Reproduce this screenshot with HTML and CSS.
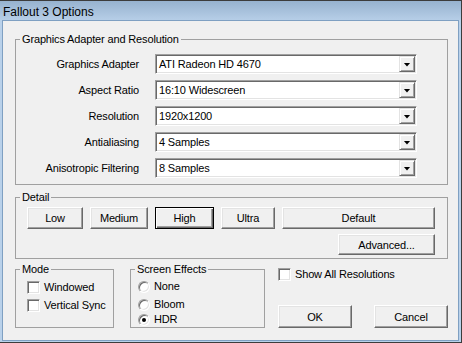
FILE: index.html
```html
<!DOCTYPE html>
<html lang="en">
<head>
  <meta charset="UTF-8" />
  <title>Fallout 3 Options</title>
  <link rel="stylesheet" href="styles.css">
</head>
<body>
  <div class="window">
    <div class="titlebar">Fallout 3 Options</div>

    <div class="client">
      <fieldset class="group">
        <legend>Graphics Adapter and Resolution</legend>
        <div class="settings">
          <label>Graphics Adapter</label>
          <div class="combo"><span>ATI Radeon HD 4670</span><i class="drop"></i></div>
          <label>Aspect Ratio</label>
          <div class="combo"><span>16:10 Widescreen</span><i class="drop"></i></div>
          <label>Resolution</label>
          <div class="combo"><span>1920x1200</span><i class="drop"></i></div>
          <label>Antialiasing</label>
          <div class="combo"><span>4 Samples</span><i class="drop"></i></div>
          <label>Anisotropic Filtering</label>
          <div class="combo"><span>8 Samples</span><i class="drop"></i></div>
        </div>
      </fieldset>

      <fieldset class="group detail">
        <legend>Detail</legend>
        <div class="presets">
          <button class="btn">Low</button>
          <button class="btn">Medium</button>
          <button class="btn focused">High</button>
          <button class="btn">Ultra</button>
          <button class="btn">Default</button>
          <button class="btn advanced">Advanced...</button>
        </div>
      </fieldset>

      <div class="bottom">
        <fieldset class="group mode">
          <legend>Mode</legend>
          <div class="options">
            <div class="check"><span class="box"></span>Windowed</div>
            <div class="check"><span class="box"></span>Vertical Sync</div>
          </div>
        </fieldset>

        <fieldset class="group effects">
          <legend>Screen Effects</legend>
          <div class="radios">
            <div class="radio first"><span class="dot"></span>None</div>
            <div class="radio"><span class="dot"></span>Bloom</div>
            <div class="radio"><span class="dot checked"></span>HDR</div>
          </div>
        </fieldset>

        <div class="actions">
          <div class="check"><span class="box"></span>Show All Resolutions</div>
          <div class="dialog-buttons">
            <button class="btn">OK</button>
            <button class="btn">Cancel</button>
          </div>
        </div>
      </div>
    </div>
  </div>
</body>
</html>
```

FILE: styles.css
```css
* {
  box-sizing: border-box;
}

body {
  margin: 0;
  font-family: 'Liberation Sans', Arial, sans-serif;
  font-size: 11px;
  letter-spacing: -0.15px;
  color: #000;
  background: #f0f0f0;
}

.window {
  width: 462px;
  height: 343px;
  display: flex;
  flex-direction: column;
  background: #b9d1ea;
  border: 1px solid #3c3c3c;
  border-left: none;
}

.titlebar {
  height: 19px;
  line-height: 23px;
  overflow: hidden;
  padding-left: 3px;
  font-size: 12px;
  letter-spacing: 0;
  background: linear-gradient(to bottom, #97b2cf, #b6cee7);
}

.client {
  flex: 1;
  margin: 0 2px 1px 2px;
  background: #f0f0f0;
  border: 1px solid #7fa0c2;
  padding: 12px 10px 0 12px;
}

.group {
  margin: 0;
  padding: 0;
  min-width: 0;
  border: 1px solid #a0a0a0;
}

.group legend {
  margin-left: 4px;
  padding: 0 2px;
  line-height: 13px;
}

/* adapter / resolution rows */
.settings {
  display: grid;
  grid-template-columns: 123px 262px;
  column-gap: 16px;
  row-gap: 6px;
  align-items: center;
  padding: 8px 0 6px 0;
}

.settings label {
  text-align: right;
}

.combo {
  height: 20px;
  display: flex;
  align-items: center;
  padding-left: 3px;
  background: #fff;
  border: 1px solid;
  border-color: #a0a0a0 #fff #fff #a0a0a0;
  box-shadow: inset 1px 1px #696969, inset -1px -1px #e3e3e3;
}

.combo span {
  flex: 1;
}

.drop {
  width: 16px;
  height: 16px;
  margin-right: 1px;
  display: flex;
  align-items: center;
  justify-content: center;
  background: #f0f0f0;
  border: 1px solid;
  border-color: #e3e3e3 #696969 #696969 #e3e3e3;
  box-shadow: inset 1px 1px #fff, inset -1px -1px #a0a0a0;
}

.drop::after {
  content: "";
  width: 7px;
  height: 4px;
  margin-top: 1px;
  background: #000;
  clip-path: polygon(0 0, 100% 0, 50% 100%);
}

/* buttons */
.btn {
  height: 22px;
  padding: 0;
  font: inherit;
  letter-spacing: inherit;
  color: #000;
  background: #f0f0f0;
  border: 1px solid;
  border-color: #fff #696969 #696969 #fff;
  box-shadow: inset -1px -1px #a0a0a0, inset 1px 1px #e3e3e3;
}

.btn.focused {
  border-color: #000;
  box-shadow: inset 1px 1px #fff, inset -1px -1px #696969, inset -2px -2px #a0a0a0;
}

.detail {
  margin-top: 6px;
}

.presets {
  display: grid;
  grid-template-columns: 56px 58px 59px 54px 153px;
  column-gap: 7px;
  row-gap: 5px;
  padding: 3px 0 3px 11px;
}

.advanced {
  grid-column: 5;
  justify-self: end;
  width: 97px;
  height: 21px;
}

/* bottom area */
.bottom {
  display: flex;
  margin-top: 4px;
}

.mode {
  width: 99px;
}

.options {
  display: flex;
  flex-direction: column;
  gap: 5px;
  padding: 5px 0 15px 11px;
}

.check {
  display: flex;
  align-items: center;
  gap: 4px;
  line-height: 13px;
}

.box {
  width: 13px;
  height: 13px;
  background: #fff;
  border: 1px solid;
  border-color: #a0a0a0 #fff #fff #a0a0a0;
  box-shadow: inset 1px 1px #696969, inset -1px -1px #e3e3e3;
}

.effects {
  width: 135px;
  margin-left: 16px;
}

.radios {
  display: flex;
  flex-direction: column;
  gap: 2px;
  padding: 4px 0 1px 7px;
}

.radio {
  display: flex;
  align-items: center;
  gap: 4px;
  line-height: 13px;
}

.radio.first {
  margin-bottom: 3px;
}

.dot {
  width: 12px;
  height: 12px;
  display: flex;
  align-items: center;
  justify-content: center;
  border-radius: 50%;
  background: #fff;
  border: 1px solid;
  border-color: #a0a0a0 #fff #fff #a0a0a0;
  box-shadow: inset 1px 1px #696969, inset -1px -1px #e3e3e3;
}

.dot.checked::after {
  content: "";
  width: 4px;
  height: 4px;
  border-radius: 50%;
  background: #000;
}

.actions {
  flex: 1;
  display: flex;
  flex-direction: column;
  margin-left: 13px;
  padding-top: 5px;
}

.dialog-buttons {
  display: flex;
  gap: 22px;
  margin-top: auto;
}

.dialog-buttons .btn {
  width: 74px;
  height: 23px;
}
```
